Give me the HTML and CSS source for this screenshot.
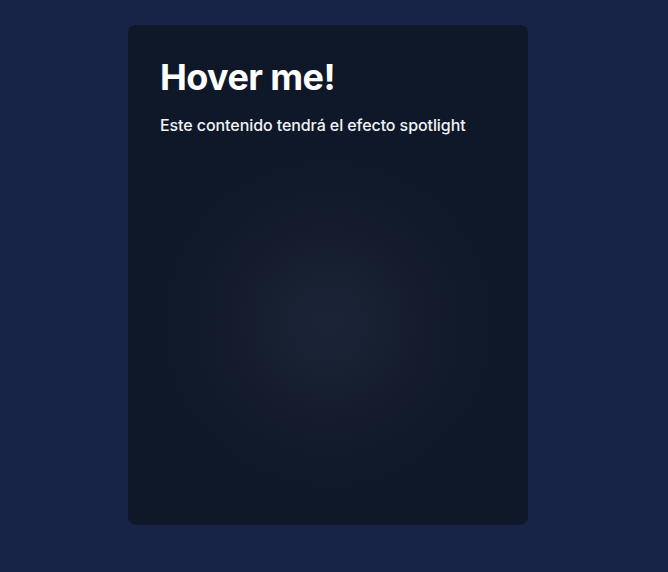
FILE: index.html
```html
<!DOCTYPE html>
<html lang="es">
<head>
<meta charset="utf-8">
<link rel="stylesheet" href="styles.css">
</head>
<body>
<div class="stage">
  <div class="card">
    <h2 class="title">Hover me!</h2>
    <p class="text">Este contenido tendrá el efecto spotlight</p>
  </div>
</div>
</body>
</html>
```
FILE: styles.css
```css
html, body {
  margin: 0;
  height: 100%;
  background: #172448;
  font-family: Inter, "Noto Sans", sans-serif;
}
.stage {
  padding: 25px 0 0 128px;
}
.card {
  position: relative;
  box-sizing: border-box;
  width: 400px;
  height: 500px;
  padding: 32px;
  border-radius: 8px;
  background:
    radial-gradient(circle 170px at 200px 298px, rgba(140,150,190,0.10) 0%, rgba(130,110,170,0.045) 55%, rgba(0,0,0,0) 100%),
    #0f1828;
  color: #fff;
}
.title {
  margin: 0 0 16px;
  font-size: 36px;
  line-height: 40px;
  font-weight: 700;
  letter-spacing: -0.6px;
}
.text {
  margin: 0;
  font-size: 16px;
  line-height: 24px;
  font-weight: 500;
  letter-spacing: -0.08px;
  color: #f1f3f7;
}
```
